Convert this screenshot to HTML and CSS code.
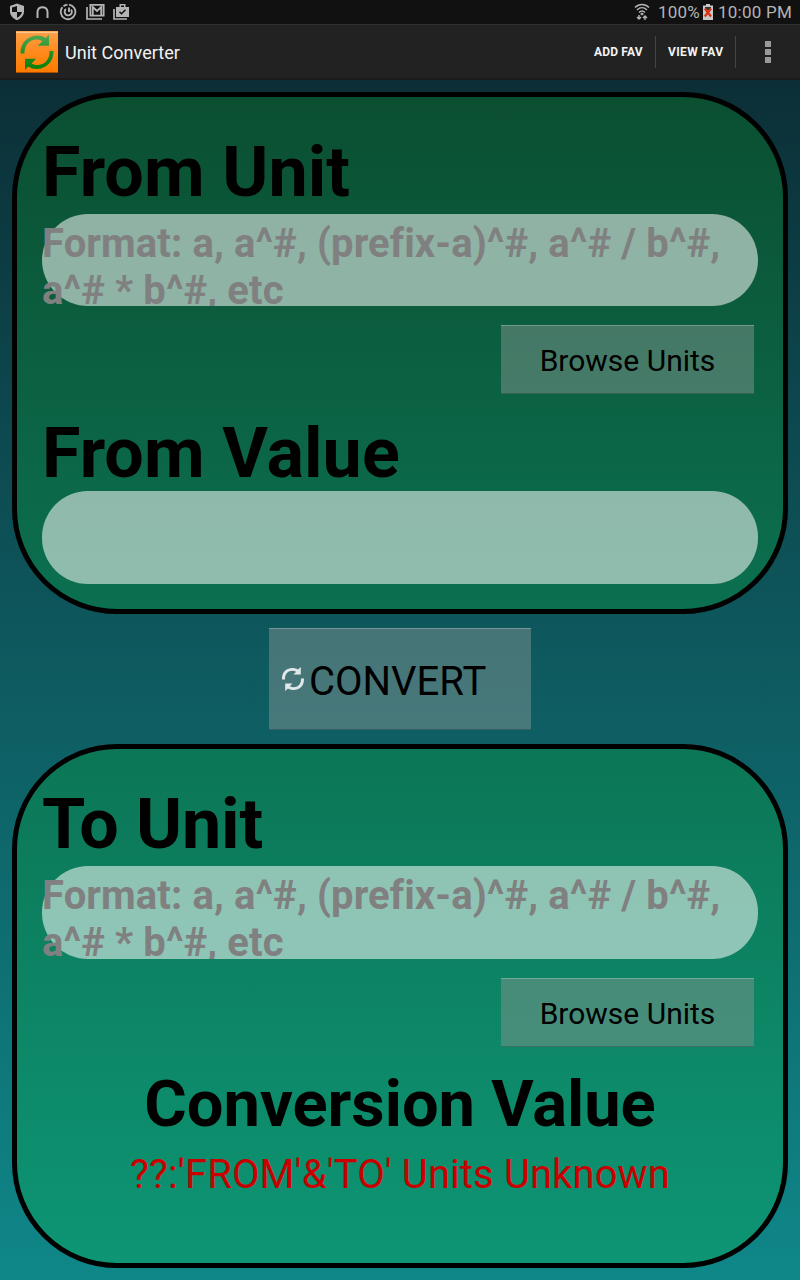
FILE: index.html
```html
<!DOCTYPE html>
<html lang="en">
<head>
<meta charset="utf-8">
<title>Unit Converter</title>
<link rel="stylesheet" href="styles.css">
</head>
<body>
<div class="status">
  <div class="notifications">
    <svg width="16" height="18" viewBox="0 0 16 18"><path d="M8 .5 15 3v5.500c0 4-3 7-7 8.700-4-1.700-7-4.700-7-8.700V3z" fill="#b4b4b4"/><path d="M8 3v6H3V4.500zM8 9h5c-.5 2.500-2.500 4.500-5 5.800z" fill="#111"/></svg>
    <svg width="14" height="18" viewBox="0 0 14 18"><path d="M2.500 15V9c0-6.500 10-6.500 10 0v6" fill="none" stroke="#b4b4b4" stroke-width="2"/></svg>
    <svg width="18" height="18" viewBox="0 0 18 18" fill="none" stroke="#b4b4b4"><path d="M10 1.700a7.300 7.300 0 1 1-6.500 2.500" stroke-width="1.800"/><path d="M4.500 3.300A7.300 7.300 0 0 1 8.500 1.700" stroke-width="1.800"/><path d="M7 6a3.600 3.600 0 1 0 5 .5M10 4.500v4.500" stroke-width="1.900"/></svg>
    <svg width="19" height="18" viewBox="0 0 19 18" fill="none" stroke="#b4b4b4" stroke-width="1.700"><path d="M1 4v12h15M4.300 1.900h13.400v10.800H4.300z"/><path d="M6.700 12.500V4l4.300 4 4.300-4v8.500" stroke-width="2"/></svg>
    <svg width="17" height="18" viewBox="0 0 17 18"><path d="M1 6v10h13" fill="none" stroke="#b4b4b4" stroke-width="1.700"/><path d="M3 4h3.500V1h6v3H16v10H3zM8 4h3V2.500H8z" fill="#b4b4b4" fill-rule="evenodd"/><path d="m6.500 8.700 2 2 4-4" fill="none" stroke="#111" stroke-width="1.500"/></svg>
  </div>
  <div class="system">
    <svg class="wifi" width="16" height="18" viewBox="0 0 16 18" fill="none" stroke="#b4b4b4" stroke-width="1.400"><path d="M1 4.500c4-4 10-4 14 0M3 7c3-3 7-3 10 0M5 9.500c2-2 4-2 6 0"/><path d="M8 9.500 10 11 8 12.500 6 11z" fill="#b4b4b4" stroke="none"/><path d="M5 12v4M3 14l2 2 2-2M11 17v-4M9 15l2-2 2 2"/></svg>
    <span class="percent">100%</span>
    <svg class="battery" width="10" height="16" viewBox="0 0 10 16"><path d="M3 0h4v1.500h3V16H0V1.500h3z" fill="#c8c8c8"/><path d="M2 3h6v3H2z" fill="#333"/><path d="m1.800 4.500 6.200 8M8 4.500l-6.200 8" stroke="#d83010" stroke-width="2.200"/></svg>
    <span>10:00 PM</span>
  </div>
</div>
<header class="bar">
  <svg class="logo" width="42" height="42" viewBox="0 0 42 42">
    <defs><linearGradient id="orange" x2="0" y2="1"><stop stop-color="#ffa04a"/><stop offset=".5" stop-color="#ff8a1c"/><stop offset="1" stop-color="#ff7b00"/></linearGradient><linearGradient id="green" x2="0" y2="1"><stop stop-color="#53a953"/><stop offset=".48" stop-color="#259025"/><stop offset="1" stop-color="#078007"/></linearGradient></defs>
    <path d="M0 0h42v42H0z" fill="url(#orange)"/><path d="M0 1.300h42" stroke="#ffd0a0"/><path d="M0 41.500h42" stroke="#a85000"/>
    <path d="M4.500 22.500C4 7 20 .5 29.800 7L33 3.500v11.300H21.800L26.500 10C18 5.500 8 11 8.500 22.500zM37.500 20C38 35.500 22 42 12.200 35.500L9 39V27.700h11.200L15.500 32.500C24 37 34 31.500 33.500 20z" fill="url(#green)"/>
  </svg>
  <h1 class="title">Unit Converter</h1>
  <span class="action add">ADD FAV</span>
  <span class="action view">VIEW FAV</span>
  <span class="more"><i></i><i></i><i></i></span>
</header>
<main class="content">
  <section class="panel from">
    <h2>From Unit</h2>
    <div class="field">Format: a, a^#, (prefix-a)^#, a^# / b^#, a^# * b^#, etc</div>
    <button class="browse">Browse Units</button>
    <h2 class="value">From Value</h2>
    <div class="field second"></div>
  </section>
  <button class="convert">
    <svg width="24" height="26" viewBox="0 0 24 26"><path d="M1 13.500C.5 2.500 11 0 17 3.500L19.800 1v7.500h-7.300l2.700-2.700C10 3 3.500 6 4 13.500zM23 12.500c.5 11-10 13.500-16 10L4.200 25v-7.500h7.300l-2.700 2.700c5.200 2.800 11.700-.2 11.200-7.700z" fill="#e0e8e8"/></svg>
    <span>CONVERT</span>
  </button>
  <section class="panel to">
    <h2>To Unit</h2>
    <div class="field">Format: a, a^#, (prefix-a)^#, a^# / b^#, a^# * b^#, etc</div>
    <button class="browse">Browse Units</button>
    <h2 class="result">Conversion Value</h2>
    <p class="error">??:'FROM'&amp;'TO' Units Unknown</p>
  </section>
</main>
</body>
</html>
```
FILE: styles.css
```css
* { box-sizing: border-box; }
body { margin: 0; width: 800px; height: 1280px; overflow: hidden; font-family: Roboto, sans-serif; color: #000; display: flex; flex-direction: column; }
svg { display: block; flex: none; }
h1, h2, p { margin: 0; }
button { font-family: inherit; border: 0; padding: 0; color: #000; }

.status { height: 24px; flex: none; background: #111; display: flex; justify-content: space-between; color: #b4b4b4; }
.notifications { display: flex; align-items: center; padding-left: 9px; gap: 10px; }
.notifications svg:nth-child(4) { margin-left: -1px; margin-right: -1px; }
.notifications svg:nth-child(5) { margin-left: -1px; }
.system { display: flex; align-items: center; font-size: 17px; letter-spacing: .23px; line-height: 24px; padding-right: 8px; white-space: nowrap; }
.wifi { margin-right: 8px; }
.percent { margin-right: 3px; }
.battery { margin-right: 5px; }

.bar { height: 56px; flex: none; background: #222; border-top: 1px solid #303030; border-bottom: 2px solid #1b1b1b; display: flex; align-items: center; padding-left: 16px; color: #f3f3f3; }
.logo { margin-top: 1px; }
.title { font-size: 18px; font-weight: 400; margin-left: 7px; flex: 1; line-height: 54px; padding-top: 2px; letter-spacing: .03px; }
.action { font-size: 12px; font-weight: 700; height: 32px; line-height: 32px; border-right: 1px solid #444; }
.add { width: 62px; letter-spacing: .15px; }
.view { width: 80px; padding-left: 12px; letter-spacing: .35px; }
.more { width: 64px; display: flex; flex-direction: column; align-items: center; gap: 2px; }
.more i { width: 6px; height: 6px; background: #999; }

.content { flex: 1; padding: 12px; background: linear-gradient(#0c2f37, #0f8789); display: flex; flex-direction: column; }
.panel { border: 5px solid #000; border-radius: 105px; padding: 0 25px; display: flex; flex-direction: column; flex: none; }
.from { height: 522px; padding-top: 34px; background: linear-gradient(#0b4f31, #0b7050); }
.to { height: 524px; padding-top: 34px; background: linear-gradient(#0c7656, #0d9574); }
.panel h2 { font-size: 70px; line-height: 82px; height: 83px; font-weight: 700; letter-spacing: .1px; }
.to h2:first-child { letter-spacing: -.15px; }
.field { height: 92px; flex: none; border-radius: 46px; background: rgba(255, 255, 255, .54); color: #808080; font-size: 40px; line-height: 47px; font-weight: 700; letter-spacing: .11px; padding-top: 6px; clip-path: inset(0); }
.browse { width: 253px; height: 69px; margin: 19px 4px 0 auto; font-size: 30px; flex: none; background: rgba(128, 148, 142, .5); border-top: 1px solid rgba(255, 255, 255, .25); border-bottom: 1px solid rgba(0, 0, 0, .2); padding-top: 1px; }
.panel .value { margin-top: 18px; height: 79px; }
.second { height: 93px; }
.convert { width: 262px; height: 102px; margin: 14px auto; flex: none; background: rgba(128, 146, 146, .5); border-top: 1px solid rgba(255, 255, 255, .25); border-bottom: 1px solid rgba(0, 0, 0, .2); display: flex; align-items: center; padding-left: 12px; font-size: 40px; gap: 4px; }
.convert span { padding-top: 4px; }
.to .field { height: 93px; }
.panel .result { font-size: 65px; line-height: 77px; height: 77px; margin-top: 19px; text-align: center; letter-spacing: 0; }
.error { color: #c80000; font-size: 40px; line-height: 47px; text-align: center; margin-top: 8px; letter-spacing: .1px; }
```
